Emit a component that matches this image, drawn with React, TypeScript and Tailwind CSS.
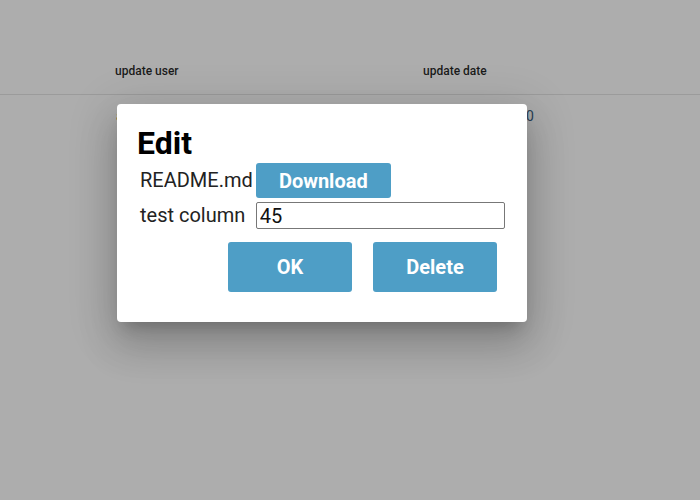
import React, { useState } from "react";

const rows = [
  { name: "README.md", user: "admin", date: "2021/03/04 12:30" },
];

const App = () => {
  const [value, setValue] = useState("45");

  return (
    <div className="relative w-[700px] h-[500px] bg-white overflow-hidden font-['Roboto',sans-serif]">
      {/* table behind the dialog */}
      <div className="flex items-end h-[95px] border-b border-black/10 text-[12px] font-medium text-black/85">
        <div className="pl-[115px] w-[423px] pb-[14px]">update user</div>
        <div className="pb-[14px]">update date</div>
      </div>
      {rows.map((r) => (
        <div key={r.name} className="flex h-[42px] items-center text-[14px]">
          <div className="pl-[116px] w-[421px] text-[#c0701a]">{r.user}</div>
          <div className="text-[#3a5f80]">{r.date}</div>
        </div>
      ))}

      {/* overlay */}
      <div className="absolute inset-0 bg-black/[0.32]" />

      {/* dialog */}
      <div className="absolute left-[117px] top-[104px] w-[410px] h-[218px] bg-white rounded-[4px] shadow-[0_11px_15px_-7px_rgba(0,0,0,0.2),0_24px_38px_3px_rgba(0,0,0,0.14),0_9px_46px_8px_rgba(0,0,0,0.12)] pt-[23px] pl-[20px] pr-[22px]">
        <h2 className="text-[32px] leading-[32px] font-bold text-black">Edit</h2>
        <div className="grid grid-cols-[auto_1fr] gap-x-[3px] gap-y-[4px] items-center mt-[4px] pl-[3px] text-[20px] text-[#222]">
          <span className="leading-[27px]">README.md</span>
          <div>
            <button className="w-[135px] h-[35px] bg-[#4e9ec6] text-white font-bold rounded-[3px] text-[20px]">
              Download
            </button>
          </div>
          <span className="leading-[27px]">test column</span>
          <input
            type="text"
            value={value}
            onChange={(e) => setValue(e.target.value)}
            className="h-[27px] w-full border border-[#777] rounded-[2px] px-[3px] text-[20px] text-[#111] outline-none"
          />
        </div>
        <div className="flex justify-end gap-[21px] mt-[13px] pr-[8px]">
          <button className="w-[124px] h-[50px] bg-[#4e9ec6] text-white font-bold rounded-[3px] text-[20px]">
            OK
          </button>
          <button className="w-[124px] h-[50px] bg-[#4e9ec6] text-white font-bold rounded-[3px] text-[20px]">
            Delete
          </button>
        </div>
      </div>
    </div>
  );
};

export default App;
